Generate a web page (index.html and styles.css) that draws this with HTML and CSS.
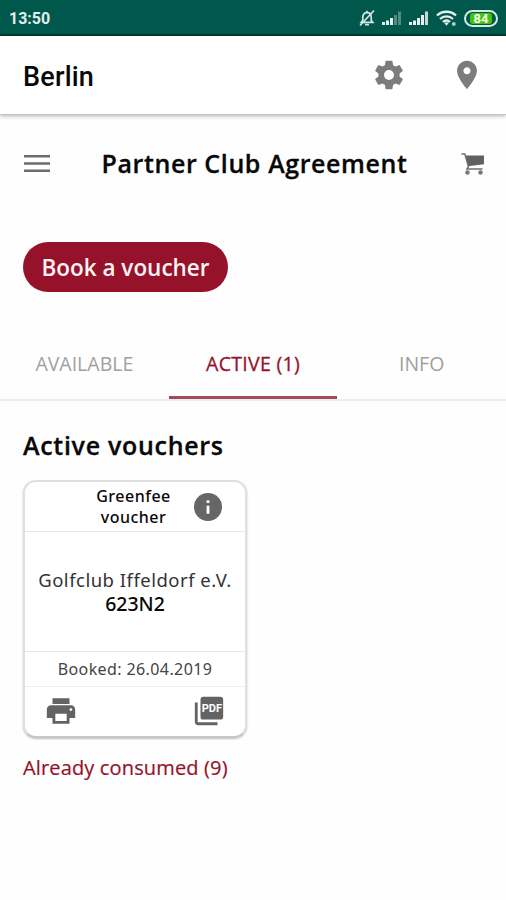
FILE: index.html
```html
<!DOCTYPE html>
<html lang="en">
  <head>
    <meta charset="UTF-8" />
    <meta name="viewport" content="width=device-width, initial-scale=1.0" />
    <title>Partner Club Agreement</title>
    <link rel="stylesheet" href="styles.css">
  </head>
  <body>
    <div class="status-bar">
      <span class="time">13:50</span>
      <div class="status-icons">
        <svg class="bell" width="18" height="18" viewBox="0 0 18 18" fill="none" stroke="#d3e6e1" stroke-width="1.7">
          <path d="M3.200 13.400h11.600l-1.600-2V8c0-2.600-1.600-4.400-4.200-4.400S4.800 5.400 4.800 8v3.400z" />
          <path d="M7 15.600h4M9 1.800v1.500M16 1.500 2 16.500" />
        </svg>
        <svg class="signal" width="20" height="16" viewBox="0 0 20 16" fill="#e6f0ee">
          <path d="M0 12h3v3H0zM4 10.500h3V15H4zM8 8h3v7H8z" />
          <path d="M12 5h3v10h-3zM16 1.500h3V15h-3z" opacity=".35" />
        </svg>
        <svg class="signal" width="20" height="16" viewBox="0 0 20 16" fill="#e6f0ee">
          <path d="M0 12h3v3H0zM4 10.500h3V15H4zM8 8h3v7H8zM12 5h3v10h-3z" />
          <path d="M16 1.500h3V15h-3z" opacity=".85" />
        </svg>
        <svg class="wifi" width="21" height="17" viewBox="0 0 21 17" fill="none" stroke="#e6f0ee" stroke-width="2.300">
          <path d="M1 5.500c5.300-5 13.700-5 19 0M4 9c3.700-3.500 9.300-3.500 13 0M7 12c2-2 5-2 7 0" />
          <path d="M8 12.500 10.500 15.800l2.500-3.300z" fill="#e6f0ee" stroke="none" />
          <circle cx="17.800" cy="14" r="2" fill="#a9c9c2" stroke="none" />
        </svg>
        <span class="battery"><span class="level">84</span></span>
      </div>
    </div>

    <header class="app-bar">
      <span class="city">Berlin</span>
      <div class="app-icons">
        <svg width="34" height="34" viewBox="0 0 24 24" fill="#7c7c7e">
          <path d="M19.430 12.980c.040-.320.070-.640.070-.980s-.030-.660-.070-.980l2.110-1.650c.190-.150.240-.420.120-.640l-2-3.460c-.120-.220-.390-.300-.610-.220l-2.490 1c-.520-.400-1.080-.730-1.690-.980l-.380-2.650C14.460 2.180 14.250 2 14 2h-4c-.250 0-.460.180-.490.420l-.380 2.650c-.610.250-1.170.590-1.690.980l-2.490-1c-.230-.090-.490 0-.610.220l-2 3.460c-.130.220-.070.490.120.640l2.110 1.650c-.040.320-.070.650-.070.980s.030.660.070.980l-2.110 1.650c-.190.150-.240.420-.120.640l2 3.460c.120.220.390.300.610.220l2.490-1c.520.400 1.080.730 1.690.980l.380 2.650c.030.240.240.420.490.420h4c.250 0 .460-.180.490-.420l.380-2.650c.610-.250 1.170-.590 1.690-.980l2.490 1c.230.090.490 0 .610-.220l2-3.460c.120-.220.070-.490-.120-.640l-2.110-1.650zM12 15.500c-1.930 0-3.500-1.570-3.500-3.500s1.570-3.500 3.500-3.500 3.500 1.570 3.500 3.500-1.570 3.500-3.500 3.500z" />
        </svg>
        <svg width="34" height="34" viewBox="0 0 24 24" fill="#7c7c7e">
          <path d="M12 2C8.130 2 5 5.130 5 9c0 5.250 7 13 7 13s7-7.750 7-13c0-3.870-3.130-7-7-7zm0 9.500c-1.380 0-2.500-1.120-2.500-2.500s1.120-2.500 2.500-2.500 2.500 1.120 2.500 2.500-1.120 2.500-2.500 2.500z" />
        </svg>
      </div>
    </header>

    <div class="title-bar">
      <svg class="menu" width="26" height="20" viewBox="0 0 26 20" fill="#6c6c6c">
        <path d="M0 1h26v2.500H0zM0 8.300h26v2.500H0zM0 15.500h26V18H0z" />
      </svg>
      <h1>Partner Club Agreement</h1>
      <svg class="cart" width="24" height="24" viewBox="0 0 24 24">
        <path d="M4 3.500h19v8.700L7 14.200z" fill="#616161" />
        <path d="M.5 2h3.300l3.700 12.500-1.500 2.500h15.500" fill="none" stroke="#707070" stroke-width="1.500" />
        <circle cx="6.500" cy="20.500" r="2.200" fill="#777" />
        <circle cx="19.500" cy="20.500" r="2.200" fill="#777" />
      </svg>
    </div>

    <main>
      <button class="book">Book a voucher</button>

      <nav class="tabs">
        <a class="tab">AVAILABLE</a>
        <a class="tab active">ACTIVE (1)</a>
        <a class="tab">INFO</a>
      </nav>

      <section class="vouchers">
        <h2>Active vouchers</h2>

        <div class="card">
          <div class="card-head">
            <span class="card-title">Greenfee<br>voucher</span>
            <svg class="info" width="28" height="28" viewBox="0 0 28 28">
              <circle cx="14" cy="14" r="14" fill="#666" />
              <path d="M12.600 12.700h2.800v8h-2.800zM12.600 7.200h2.800V10h-2.800z" fill="#fff" />
            </svg>
          </div>
          <div class="card-body">
            <span class="club">Golfclub Iffeldorf e.V.</span>
            <span class="code">623N2</span>
          </div>
          <div class="card-date"><span>Booked: 26.04.2019</span></div>
          <div class="card-actions">
            <svg width="34" height="34" viewBox="0 0 24 24" fill="#636363">
              <path d="M19 8H5c-1.660 0-3 1.340-3 3v6h4v4h12v-4h4v-6c0-1.660-1.340-3-3-3zm-3 11H8v-5h8v5zm3-7c-.550 0-1-.450-1-1s.450-1 1-1 1 .450 1 1-.450 1-1 1zm-1-9H6v4h12V3z" />
            </svg>
            <svg width="34" height="34" viewBox="0 0 24 24">
              <rect x="6" y="2" width="16" height="16" rx="2" fill="#636363" />
              <path d="M2 6h2v14h14v2H4c-1.100 0-2-.900-2-2z" fill="#636363" />
              <text class="pdf" x="14" y="12.600" text-anchor="middle">PDF</text>
            </svg>
          </div>
        </div>

        <a class="consumed">Already consumed (9)</a>
      </section>
    </main>
  </body>
</html>
```
FILE: styles.css
```css
* {
  margin: 0;
  padding: 0;
  box-sizing: border-box;
}

body {
  font-family: "Open Sans", sans-serif;
  background: #fefefe;
  color: #080808;
  height: 900px;
  overflow: hidden;
}

svg {
  display: block;
}

.status-bar {
  display: flex;
  justify-content: space-between;
  align-items: center;
  height: 36px;
  padding: 0 8px 0 9px;
  background: #00574b;
  border-bottom: 2px solid #003d2c;
}

.time {
  font-family: Roboto, sans-serif;
  font-size: 16px;
  font-weight: 700;
  color: #e2eeeb;
  padding-top: 3px;
}

.status-icons {
  display: flex;
  align-items: center;
  padding-top: 2px;
}

.bell {
  margin-right: 6px;
}

.signal {
  margin-right: 7px;
}

.wifi {
  margin-right: 7px;
}

.battery {
  width: 34px;
  height: 17px;
  padding: 1px;
  border: 2px solid #d5ebdc;
  border-radius: 9px;
}

.level {
  display: block;
  height: 11px;
  margin: 0 3px;
  background: #43c310;
  border-radius: 3px;
  color: #f4ffe9;
  font: 700 13px/11px Roboto, sans-serif;
  text-align: center;
}

.app-bar {
  display: flex;
  justify-content: space-between;
  align-items: center;
  height: 79px;
  padding: 0 22px 0 23px;
  background: #fff;
  border-bottom: 1px solid #c4c4c4;
  box-shadow: 0 1px 4px rgba(0, 0, 0, 0.3);
}

.city {
  font-family: Roboto, sans-serif;
  font-size: 27px;
  font-weight: 500;
  padding-top: 4px;
  letter-spacing: 0.2px;
}

.app-icons {
  display: flex;
  gap: 44px;
}

.title-bar {
  display: flex;
  justify-content: space-between;
  align-items: center;
  height: 98px;
  padding: 0 21px 0 24px;
}

h1 {
  font-size: 25px;
  font-weight: 600;
  letter-spacing: 0.6px;
  padding: 0 2px 2px 0;
  -webkit-text-stroke: 0.3px #080808;
}

.book {
  display: block;
  width: 205px;
  height: 50px;
  margin: 29px 0 0 23px;
  background: #96122b;
  color: #fff3f3;
  border: none;
  border-radius: 25px;
  font-family: inherit;
  font-size: 22.5px;
  font-weight: 600;
  white-space: nowrap;
}

.tabs {
  display: grid;
  grid-template-columns: 1fr 1fr 1fr;
  height: 73px;
  margin-top: 36px;
  border-bottom: 2px solid #ececec;
}

.tab {
  height: 71px;
  border-bottom: 3px solid transparent;
  font-size: 19.5px;
  line-height: 72px;
  text-align: center;
  color: #a0a0a0;
}

.tab.active {
  color: #96122b;
  border-color: #a04c5a;
  font-weight: 500;
  -webkit-text-stroke: 0.3px #96122b;
  letter-spacing: 0.3px;
}

.vouchers {
  padding: 26px 23px 0;
}

h2 {
  font-size: 25px;
  font-weight: 600;
  line-height: 36px;
  letter-spacing: 0.7px;
  -webkit-text-stroke: 0.3px #080808;
}

.card {
  width: 224px;
  height: 258px;
  margin-top: 17px;
  background: #fff;
  border: 2px solid #dfe1e1;
  border-bottom-color: #c6c9c9;
  border-radius: 13px;
  box-shadow: 0 1px 2px rgba(0, 0, 0, 0.25);
  font-family: "Noto Sans", sans-serif;
}

.card-head {
  display: flex;
  align-items: center;
  height: 50px;
  padding-left: 70px;
  border-bottom: 1px solid #e6e9e9;
}

.card-title {
  width: 77px;
  font-size: 16px;
  font-weight: 500;
  line-height: 21px;
  letter-spacing: 0.5px;
  text-align: center;
}

.info {
  margin-left: 22px;
}

.card-body {
  display: flex;
  flex-direction: column;
  justify-content: center;
  align-items: center;
  height: 120px;
  border-bottom: 1px solid #e6e9e9;
  line-height: 24px;
  white-space: nowrap;
}

.club {
  font-size: 18.5px;
  letter-spacing: 0.5px;
  color: #333;
}

.code {
  font-size: 19.5px;
  font-weight: 500;
}

.card-date {
  height: 35px;
  border-bottom: 1px solid #eceeee;
  font-size: 16px;
  line-height: 34px;
  letter-spacing: 0.4px;
  text-align: center;
  color: #444;
}

.card-actions {
  display: flex;
  justify-content: space-between;
  align-items: center;
  height: 49px;
  padding: 0 19px 1px;
}

.pdf {
  font: 700 7.8px Roboto, sans-serif;
  fill: #fff;
}

.consumed {
  display: block;
  margin-top: 16px;
  font-size: 20px;
  line-height: 28px;
  font-weight: 500;
  letter-spacing: 0.15px;
  color: #96122b;
  -webkit-text-stroke: 0.2px #96122b;
}
```
